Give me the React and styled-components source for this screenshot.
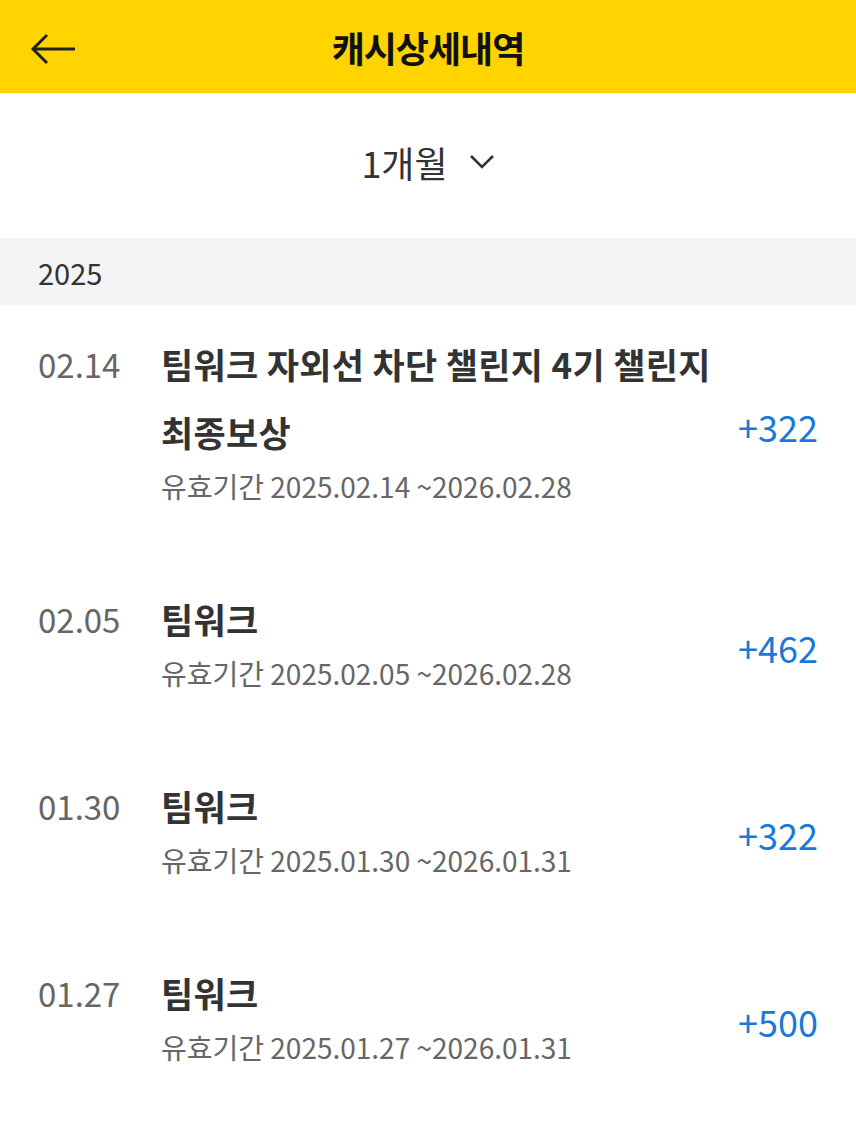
import React from "react";
import styled, { createGlobalStyle } from "styled-components";

const GlobalStyle = createGlobalStyle`
  html, body {
    margin: 0;
    padding: 0;
    background: #fff;
    font-family: "Noto Sans CJK KR", "Noto Sans", sans-serif;
  }
`;

const Page = styled.div`
  width: 856px;
  min-height: 1136px;
  background: #fff;
`;

const Header = styled.header`
  position: relative;
  height: 93px;
  background: #ffd400;
  display: flex;
  align-items: center;
  justify-content: center;
`;

const BackButton = styled.button`
  position: absolute;
  left: 30px;
  top: 30px;
  width: 48px;
  height: 38px;
  padding: 0;
  border: 0;
  background: none;
  display: flex;
  align-items: center;
`;

const Title = styled.h1`
  margin: 0;
  font-size: 36px;
  font-weight: 700;
  color: #111;
  letter-spacing: -1px;
`;

const PeriodBar = styled.div`
  height: 137px;
  padding-bottom: 8px;
  display: flex;
  align-items: center;
  justify-content: center;
  gap: 21px;
  font-size: 36px;
  color: #333;
`;

const YearBand = styled.div`
  height: 67px;
  background: #f4f4f4;
  display: flex;
  align-items: center;
  padding-left: 38px;
  font-size: 29px;
  color: #333;
`;

const Row = styled.div`
  display: flex;
  padding: 0 38px;
`;

const Left = styled.div`
  flex: 1;
  display: flex;
  padding: 25px 0 54px;
`;

const DateCell = styled.div`
  width: 123px;
  flex-shrink: 0;
  font-size: 33px;
  line-height: 68px;
  color: #666;
`;

const Body = styled.div`
  flex: 1;
  display: flex;
  flex-direction: column;
`;

const ItemTitle = styled.div`
  font-size: 35px;
  font-weight: 700;
  line-height: 68px;
  color: #333;
  max-width: 580px;
  word-break: keep-all;
  letter-spacing: 0.3px;
`;

const Validity = styled.div`
  font-size: 28px;
  line-height: 40px;
  color: #666;
`;

const Amount = styled.div`
  align-self: center;
  margin-bottom: 14px;
  font-size: 36px;
  color: #1a78d8;
`;

const items = [
  { date: "02.14", title: "팀워크 자외선 차단 챌린지 4기 챌린지 최종보상", valid: "2025.02.14 ~2026.02.28", amount: "+322" },
  { date: "02.05", title: "팀워크", valid: "2025.02.05 ~2026.02.28", amount: "+462" },
  { date: "01.30", title: "팀워크", valid: "2025.01.30 ~2026.01.31", amount: "+322" },
  { date: "01.27", title: "팀워크", valid: "2025.01.27 ~2026.01.31", amount: "+500" },
];

export default function App() {
  return (
    <Page>
      <GlobalStyle />
      <Header>
        <BackButton aria-label="뒤로">
          <svg width="46" height="34" viewBox="0 0 46 34" fill="none" stroke="#222" strokeWidth="3">
            <path d="M3 17h42" />
            <path d="M17 3 3 17l14 14" />
          </svg>
        </BackButton>
        <Title>캐시상세내역</Title>
      </Header>
      <PeriodBar>
        <span>1개월</span>
        <svg width="26" height="18" viewBox="0 0 26 18" fill="none" stroke="#333" strokeWidth="2.6">
          <path d="M2 3l11 11L24 3" />
        </svg>
      </PeriodBar>
      <YearBand>2025</YearBand>
      {items.map((it, i) => (
        <Row key={i}>
          <Left>
            <DateCell>{it.date}</DateCell>
            <Body>
              <ItemTitle>{it.title}</ItemTitle>
              <Validity>유효기간 {it.valid}</Validity>
            </Body>
          </Left>
          <Amount>{it.amount}</Amount>
        </Row>
      ))}
    </Page>
  );
}
